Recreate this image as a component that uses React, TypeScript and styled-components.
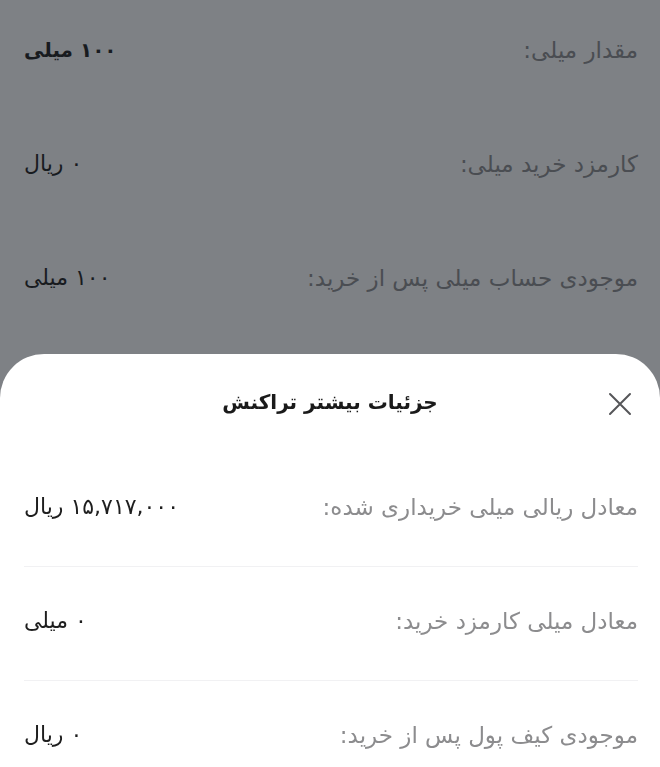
import React from "react";
import styled, { createGlobalStyle } from "styled-components";

const Global = createGlobalStyle`
  html, body {
    margin: 0;
    padding: 0;
    background: #ffffff;
    direction: rtl;
    font-family: "DejaVu Sans", "Noto Sans", sans-serif;
  }
  #root { min-height: 767px; }
`;

const Page = styled.main`
  display: flex;
  flex-direction: column;
  padding: 0 22px 0 24px;
`;

const Row = styled.div<{ $top: number; $bottom: number; $divider?: boolean }>`
  display: flex;
  justify-content: space-between;
  align-items: center;
  flex-shrink: 0;
  padding: ${(p) => p.$top}px 0 ${(p) => p.$bottom}px;
  line-height: 30px;
  height: 30px;
  border-bottom: 1px solid ${(p) => (p.$divider ? "#f1f1f3" : "transparent")};
`;

const Label = styled.span`
  font-size: 23px;
  color: #8c8c8e;
  white-space: nowrap;
`;

const Value = styled.span<{ $bold?: boolean }>`
  font-size: ${(p) => (p.$bold ? 20 : 22)}px;
  color: #1e1e1e;
  font-weight: ${(p) => (p.$bold ? 700 : 400)};
  white-space: nowrap;
`;

const Overlay = styled.div`
  position: fixed;
  inset: 0;
  background: rgba(20, 26, 32, 0.55);
`;

const Sheet = styled.section`
  position: fixed;
  left: 0;
  right: 0;
  top: 354px;
  bottom: 0;
  background: #ffffff;
  border-radius: 44px 44px 0 0;
  display: flex;
  flex-direction: column;
  overflow: hidden;
`;

const Header = styled.header`
  position: relative;
  flex-shrink: 0;
  display: flex;
  justify-content: center;
  align-items: center;
  height: 99px;
  padding-bottom: 3px;
  box-sizing: border-box;
`;

const Title = styled.h2`
  margin: 0;
  font-size: 20px;
  font-weight: 700;
  color: #1a1a1a;
  line-height: 30px;
`;

const CloseButton = styled.button`
  position: absolute;
  right: 27px;
  top: 37px;
  width: 26px;
  height: 26px;
  padding: 0;
  border: none;
  background: transparent;
  display: flex;
  align-items: center;
  justify-content: center;
  cursor: pointer;
`;

const SheetBody = styled.div`
  display: flex;
  flex-direction: column;
  padding: 0 22px 0 24px;
`;

const backgroundRows = [
  { label: "مقدار میلی:", value: "۱۰۰ میلی", bold: true },
  { label: "کارمزد خرید میلی:", value: "۰ ریال" },
  { label: "موجودی حساب میلی پس از خرید:", value: "۱۰۰ میلی" },
  { label: "", value: "" },
];

const sheetRows = [
  { label: "معادل ریالی میلی خریداری شده:", value: "۱۵,۷۱۷,۰۰۰ ریال" },
  { label: "معادل میلی کارمزد خرید:", value: "۰ میلی" },
  { label: "موجودی کیف پول پس از خرید:", value: "۰ ریال" },
];

export default function App() {
  return (
    <>
      <Global />
      <Page>
        {backgroundRows.map((r, i) => (
          <Row key={i} $top={35} $bottom={48}>
            <Label>{r.label}</Label>
            <Value $bold={r.bold}>{r.value}</Value>
          </Row>
        ))}
      </Page>
      <Overlay />
      <Sheet>
        <Header>
          <Title>جزئیات بیشتر تراکنش</Title>
          <CloseButton aria-label="بستن">
            <svg width="24" height="24" viewBox="0 0 24 24" fill="none">
              <path d="M2 2 L22 22 M22 2 L2 22" stroke="#555659" strokeWidth="2" strokeLinecap="round" />
            </svg>
          </CloseButton>
        </Header>
        <SheetBody>
          {sheetRows.map((r, i) => (
            <Row key={i} $top={39} $bottom={44} $divider={i < sheetRows.length - 1}>
              <Label>{r.label}</Label>
              <Value>{r.value}</Value>
            </Row>
          ))}
        </SheetBody>
      </Sheet>
    </>
  );
}
